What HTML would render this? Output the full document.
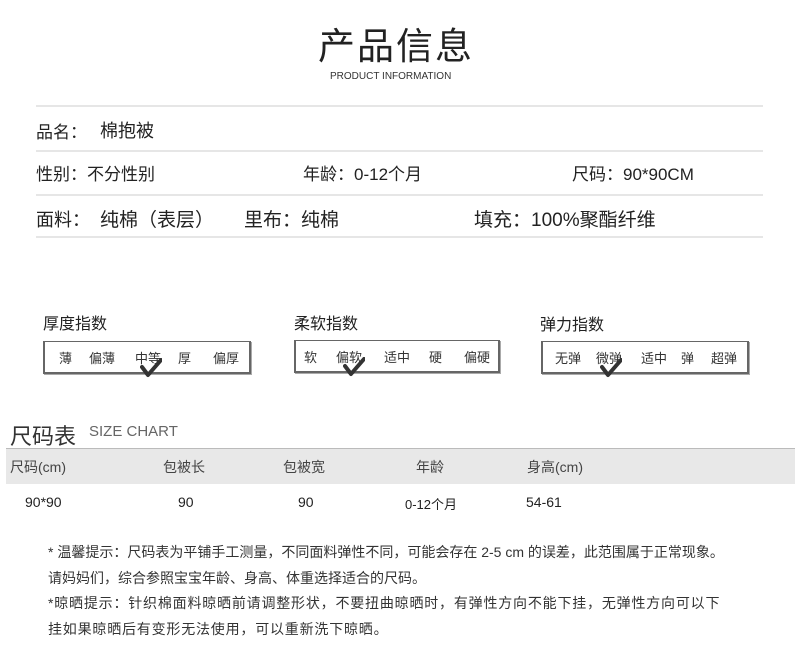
<!DOCTYPE html>
<html><head><meta charset="utf-8"><style>
body{margin:0;width:800px;height:657px;background:#fff;position:relative;overflow:hidden;font-family:"Liberation Sans","Noto Sans CJK SC",sans-serif;color:#222}
.a{position:absolute;white-space:nowrap}
.hl{position:absolute;left:36px;width:727px;height:2px;background:#e6e6e6}
.box{position:absolute;height:30px;border:2px solid #666;border-top-width:1px;border-right-width:2px;box-shadow:1px 1px 0 #aaa}
.box span{position:absolute;top:6px;font-size:13px;color:#333}
.ck{position:absolute;width:22px;height:20px}
</style></head><body>
<div class="a" style="left:318px;top:16px;font-size:37px;color:#222;letter-spacing:2px">产品信息</div>
<div class="a" style="left:330px;top:71px;font-size:10px;color:#333">PRODUCT INFORMATION</div>
<div class="hl" style="top:105px"></div>
<div class="hl" style="top:150px"></div>
<div class="hl" style="top:194px"></div>
<div class="hl" style="top:236px"></div>
<div class="a" style="left:36px;top:118px;font-size:17px">品名：</div>
<div class="a" style="left:100px;top:117px;font-size:18px">棉抱被</div>
<div class="a" style="left:36px;top:160px;font-size:17px">性别：不分性别</div>
<div class="a" style="left:303px;top:160px;font-size:17px">年龄：0-12个月</div>
<div class="a" style="left:572px;top:160px;font-size:17px">尺码：90*90CM</div>
<div class="a" style="left:36px;top:206px;font-size:18px">面料：</div>
<div class="a" style="left:100px;top:205px;font-size:19px">纯棉（表层）</div>
<div class="a" style="left:244px;top:205px;font-size:19px">里布：纯棉</div>
<div class="a" style="left:474px;top:205px;font-size:19px">填充：100%聚酯纤维</div>

<div class="a" style="left:43px;top:310px;font-size:16px">厚度指数</div>
<div class="a" style="left:294px;top:310px;font-size:16px">柔软指数</div>
<div class="a" style="left:540px;top:311px;font-size:16px">弹力指数</div>
<div class="box" style="left:43px;top:341px;width:204px"><span style="left:14px">薄</span><span style="left:44px">偏薄</span><span style="left:90px">中等</span><span style="left:133px">厚</span><span style="left:168px">偏厚</span></div>
<div class="box" style="left:294px;top:340px;width:202px"><span style="left:8px">软</span><span style="left:40px">偏软</span><span style="left:88px">适中</span><span style="left:133px">硬</span><span style="left:168px">偏硬</span></div>
<div class="box" style="left:541px;top:341px;width:204px"><span style="left:12px">无弹</span><span style="left:53px">微弹</span><span style="left:98px">适中</span><span style="left:138px">弹</span><span style="left:168px">超弹</span></div>
<svg class="ck" style="left:140px;top:358px" viewBox="0 0 22 20"><path d="M2 9 L8 17 L21 2" fill="none" stroke="#333" stroke-width="4" stroke-linecap="round" stroke-linejoin="round"/></svg>
<svg class="ck" style="left:343px;top:357px" viewBox="0 0 22 20"><path d="M2 9 L8 17 L21 2" fill="none" stroke="#333" stroke-width="4" stroke-linecap="round" stroke-linejoin="round"/></svg>
<svg class="ck" style="left:600px;top:358px" viewBox="0 0 22 20"><path d="M2 9 L8 17 L21 2" fill="none" stroke="#333" stroke-width="4" stroke-linecap="round" stroke-linejoin="round"/></svg>

<div class="a" style="left:10px;top:419px;font-size:22px;color:#333">尺码表</div>
<div class="a" style="left:89px;top:423px;font-size:15px;color:#666">SIZE CHART</div>
<div class="a" style="left:6px;top:448px;width:789px;height:35px;background:#e8e8e8;border-top:1px solid #bbb"></div>
<div class="a" style="left:10px;top:457px;font-size:14px;color:#444">尺码(cm)</div>
<div class="a" style="left:163px;top:457px;font-size:14px;color:#444">包被长</div>
<div class="a" style="left:283px;top:457px;font-size:14px;color:#444">包被宽</div>
<div class="a" style="left:416px;top:457px;font-size:14px;color:#444">年龄</div>
<div class="a" style="left:527px;top:457px;font-size:14px;color:#444">身高(cm)</div>
<div class="a" style="left:25px;top:494px;font-size:14px">90*90</div>
<div class="a" style="left:178px;top:494px;font-size:14px">90</div>
<div class="a" style="left:298px;top:494px;font-size:14px">90</div>
<div class="a" style="left:405px;top:494px;font-size:13px">0-12个月</div>
<div class="a" style="left:526px;top:494px;font-size:14px">54-61</div>

<div class="a" style="left:48px;top:540px;font-size:14px;line-height:25.5px;color:#333">* 温馨提示：尺码表为平铺手工测量，不同面料弹性不同，可能会存在 2-5 cm 的误差，此范围属于正常现象。<br>请妈妈们，综合参照宝宝年龄、身高、体重选择适合的尺码。<br><span style="letter-spacing:0.8px">*晾晒提示：针织棉面料晾晒前请调整形状，不要扭曲晾晒时，有弹性方向不能下挂，无弹性方向可以下</span><br><span style="letter-spacing:0.8px">挂如果晾晒后有变形无法使用，可以重新洗下晾晒。</span></div>
</body></html>
